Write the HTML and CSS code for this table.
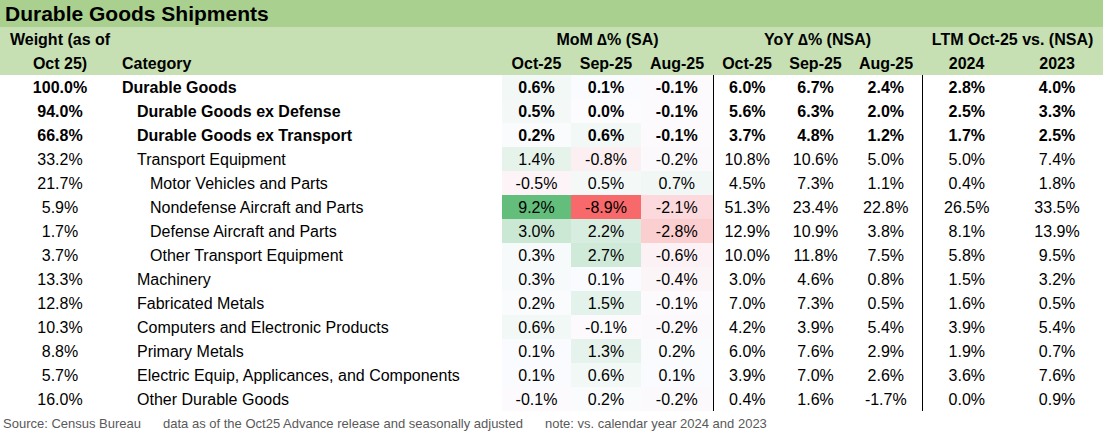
FILE: index.html
```html
<!DOCTYPE html>
<html>
<head>
<meta charset="utf-8">
<link rel="stylesheet" href="styles.css">
</head>
<body>
<div class="sheet">
  <div class="title">Durable Goods Shipments</div>
  <table class="grid">
    <colgroup>
      <col class="c-w"><col class="c-cat">
      <col class="c-m1"><col class="c-m2"><col class="c-m3">
      <col class="c-y1"><col class="c-y2"><col class="c-y3">
      <col class="c-l1"><col class="c-l2">
    </colgroup>
    <thead>
      <tr>
        <th>Weight (as of</th>
        <th></th>
        <th colspan="3">MoM ∆% (SA)</th>
        <th colspan="3">YoY ∆% (NSA)</th>
        <th colspan="2">LTM Oct-25 vs. (NSA)</th>
      </tr>
      <tr>
        <th>Oct 25)</th>
        <th class="cat">Category</th>
        <th>Oct-25</th><th>Sep-25</th><th>Aug-25</th>
        <th>Oct-25</th><th>Sep-25</th><th>Aug-25</th>
        <th>2024</th><th>2023</th>
      </tr>
    </thead>
    <tbody>
      <tr class="b"><td>100.0%</td><td class="cat">Durable Goods</td>
        <td style="background:rgb(242,248,246)">0.6%</td><td style="background:rgb(250,251,254)">0.1%</td><td style="background:rgb(252,250,253)">-0.1%</td>
        <td class="sep">6.0%</td><td>6.7%</td><td>2.4%</td><td class="sep">2.8%</td><td>4.0%</td></tr>
      <tr class="b"><td>94.0%</td><td class="cat l1">Durable Goods ex Defense</td>
        <td style="background:rgb(244,249,248)">0.5%</td><td style="background:rgb(252,252,255)">0.0%</td><td style="background:rgb(252,250,253)">-0.1%</td>
        <td class="sep">5.6%</td><td>6.3%</td><td>2.0%</td><td class="sep">2.5%</td><td>3.3%</td></tr>
      <tr class="b"><td>66.8%</td><td class="cat l1">Durable Goods ex Transport</td>
        <td style="background:rgb(249,251,252)">0.2%</td><td style="background:rgb(242,248,246)">0.6%</td><td style="background:rgb(252,250,253)">-0.1%</td>
        <td class="sep">3.7%</td><td>4.8%</td><td>1.2%</td><td class="sep">1.7%</td><td>2.5%</td></tr>
      <tr><td>33.2%</td><td class="cat l1">Transport Equipment</td>
        <td style="background:rgb(229,243,235)">1.4%</td><td style="background:rgb(252,239,242)">-0.8%</td><td style="background:rgb(252,249,252)">-0.2%</td>
        <td class="sep">10.8%</td><td>10.6%</td><td>5.0%</td><td class="sep">5.0%</td><td>7.4%</td></tr>
      <tr><td>21.7%</td><td class="cat l2">Motor Vehicles and Parts</td>
        <td style="background:rgb(252,244,247)">-0.5%</td><td style="background:rgb(244,249,248)">0.5%</td><td style="background:rgb(240,247,245)">0.7%</td>
        <td class="sep">4.5%</td><td>7.3%</td><td>1.1%</td><td class="sep">0.4%</td><td>1.8%</td></tr>
      <tr><td>5.9%</td><td class="cat l2">Nondefense Aircraft and Parts</td>
        <td style="background:rgb(99,190,123)">9.2%</td><td style="background:rgb(248,105,107)">-8.9%</td><td style="background:rgb(251,217,220)">-2.1%</td>
        <td class="sep">51.3%</td><td>23.4%</td><td>22.8%</td><td class="sep">26.5%</td><td>33.5%</td></tr>
      <tr><td>1.7%</td><td class="cat l2">Defense Aircraft and Parts</td>
        <td style="background:rgb(202,232,212)">3.0%</td><td style="background:rgb(215,237,223)">2.2%</td><td style="background:rgb(251,206,208)">-2.8%</td>
        <td class="sep">12.9%</td><td>10.9%</td><td>3.8%</td><td class="sep">8.1%</td><td>13.9%</td></tr>
      <tr><td>3.7%</td><td class="cat l2">Other Transport Equipment</td>
        <td style="background:rgb(247,250,251)">0.3%</td><td style="background:rgb(207,234,216)">2.7%</td><td style="background:rgb(252,242,245)">-0.6%</td>
        <td class="sep">10.0%</td><td>11.8%</td><td>7.5%</td><td class="sep">5.8%</td><td>9.5%</td></tr>
      <tr><td>13.3%</td><td class="cat l1">Machinery</td>
        <td style="background:rgb(247,250,251)">0.3%</td><td style="background:rgb(250,251,254)">0.1%</td><td style="background:rgb(252,245,248)">-0.4%</td>
        <td class="sep">3.0%</td><td>4.6%</td><td>0.8%</td><td class="sep">1.5%</td><td>3.2%</td></tr>
      <tr><td>12.8%</td><td class="cat l1">Fabricated Metals</td>
        <td style="background:rgb(249,251,252)">0.2%</td><td style="background:rgb(227,242,234)">1.5%</td><td style="background:rgb(252,250,253)">-0.1%</td>
        <td class="sep">7.0%</td><td>7.3%</td><td>0.5%</td><td class="sep">1.6%</td><td>0.5%</td></tr>
      <tr><td>10.3%</td><td class="cat l1">Computers and Electronic Products</td>
        <td style="background:rgb(242,248,246)">0.6%</td><td style="background:rgb(252,250,253)">-0.1%</td><td style="background:rgb(252,249,252)">-0.2%</td>
        <td class="sep">4.2%</td><td>3.9%</td><td>5.4%</td><td class="sep">3.9%</td><td>5.4%</td></tr>
      <tr><td>8.8%</td><td class="cat l1">Primary Metals</td>
        <td style="background:rgb(250,251,254)">0.1%</td><td style="background:rgb(230,243,236)">1.3%</td><td style="background:rgb(249,251,252)">0.2%</td>
        <td class="sep">6.0%</td><td>7.6%</td><td>2.9%</td><td class="sep">1.9%</td><td>0.7%</td></tr>
      <tr><td>5.7%</td><td class="cat l1">Electric Equip, Applicances, and Components</td>
        <td style="background:rgb(250,251,254)">0.1%</td><td style="background:rgb(242,248,246)">0.6%</td><td style="background:rgb(250,251,254)">0.1%</td>
        <td class="sep">3.9%</td><td>7.0%</td><td>2.6%</td><td class="sep">3.6%</td><td>7.6%</td></tr>
      <tr><td>16.0%</td><td class="cat l1">Other Durable Goods</td>
        <td style="background:rgb(252,250,253)">-0.1%</td><td style="background:rgb(249,251,252)">0.2%</td><td style="background:rgb(252,249,252)">-0.2%</td>
        <td class="sep">0.4%</td><td>1.6%</td><td>-1.7%</td><td class="sep">0.0%</td><td>0.9%</td></tr>
    </tbody>
  </table>
  <div class="foot">
    <span>Source: Census Bureau</span>
    <span>data as of the Oct25 Advance release and seasonally adjusted</span>
    <span>note: vs. calendar year 2024 and 2023</span>
  </div>
</div>
</body>
</html>
```
FILE: styles.css
```css
html, body {
  margin: 0;
  padding: 0;
  background: #ffffff;
}
body {
  font-family: "Liberation Sans", Arial, sans-serif;
  color: #000;
}
.sheet {
  width: 1103px;
}
.title {
  background: #a9d08e;
  height: 27px;
  box-sizing: border-box;
  padding-top: 1px;
  line-height: 26px;
  font-size: 21px;
  font-weight: bold;
  padding-left: 5px;
}
.grid {
  border-collapse: collapse;
  table-layout: fixed;
  width: 1103px;
}
.c-w { width: 120px; }
.c-cat { width: 382px; }
.c-m1 { width: 69px; }
.c-m2 { width: 70px; }
.c-m3 { width: 72px; }
.c-y1 { width: 68px; }
.c-y2 { width: 69px; }
.c-y3 { width: 72px; }
.c-l1 { width: 89px; }
.c-l2 { width: 92px; }
.grid tr {
  height: 24px;
}
.grid th,
.grid td {
  padding: 1px 0 0 0;
  line-height: 23px;
  font-size: 16px;
  text-align: center;
  white-space: nowrap;
}
.grid tbody td {
  padding-top: 2px;
  line-height: 22px;
}
.grid thead th {
  background: #c6e0b4;
  font-weight: bold;
}
.grid .cat {
  text-align: left;
  padding-left: 2px;
}
.grid .l1 { padding-left: 17px; }
.grid .l2 { padding-left: 30px; }
.grid .sep {
  border-left: 1px solid #000;
}
.grid .b td {
  font-weight: bold;
}
.foot {
  display: flex;
  gap: 22px;
  box-sizing: border-box;
  height: 22px;
  padding-top: 3px;
  line-height: 19px;
  font-size: 13px;
  color: #595959;
  padding-left: 3px;
}
```
